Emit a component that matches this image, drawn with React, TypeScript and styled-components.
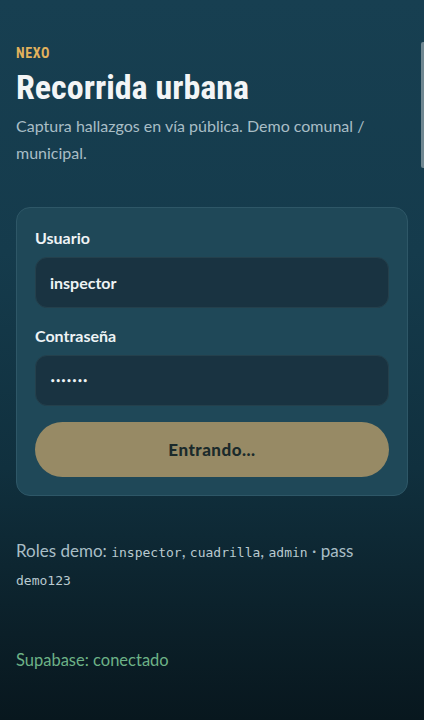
import React from "react";
import styled, { createGlobalStyle } from "styled-components";

const Global = createGlobalStyle`
  html, body { margin: 0; padding: 0; height: 100%; }
  body {
    background: #0b1c24;
    font-family: Lato, "Noto Sans", sans-serif;
  }
  #root { min-height: 100vh; }
`;

const Page = styled.main`
  position: relative;
  min-height: 720px;
  box-sizing: border-box;
  padding: 44px 16px 40px;
  background: linear-gradient(180deg, #173f51 0%, #153b4c 35%, #10303e 65%, #0b1f28 88%, #08171e 100%);
  color: #e8eef0;
  overflow: hidden;
`;

const ScrollThumb = styled.div`
  position: absolute;
  top: 42px;
  right: 0;
  width: 3px;
  height: 126px;
  border-radius: 2px 0 0 2px;
  background: #6f8791;
`;

const Brand = styled.div`
  font-family: "Liberation Sans Narrow", "Roboto Condensed", "DejaVu Sans Condensed", "Noto Sans", sans-serif;
  font-stretch: condensed;
  font-weight: 700;
  font-size: 14px;
  letter-spacing: 0.6px;
  color: #e2b25c;
  line-height: 18px;
`;

const Title = styled.h1`
  margin: 6px 0 0;
  font-family: "Liberation Sans Narrow", "Roboto Condensed", "DejaVu Sans Condensed", "Noto Sans", sans-serif;
  font-stretch: condensed;
  font-weight: 700;
  font-size: 34px;
  line-height: 38px;
  letter-spacing: 0px;
  color: #f3f5f6;
`;

const Subtitle = styled.p`
  margin: 6px 0 0;
  font-size: 16px;
  line-height: 27px;
  color: #a9bec6;
`;

const Card = styled.form`
  margin-top: 41px;
  box-sizing: border-box;
  border: 1px solid #2e5767;
  border-radius: 14px;
  background: #1f4858;
  padding: 18px;
  display: flex;
  flex-direction: column;
`;

const Label = styled.label<{ $gap?: number }>`
  font-size: 16px;
  font-weight: 700;
  line-height: 24px;
  color: #eef3f5;
  margin-top: ${(p) => p.$gap ?? 0}px;
`;

const Input = styled.div`
  margin-top: 7px;
  height: 51px;
  box-sizing: border-box;
  border: 1px solid #24404c;
  border-radius: 12px;
  background: #193341;
  display: flex;
  align-items: center;
  padding: 0 14px;
  font-size: 16px;
  font-weight: 700;
  color: #eef3f5;
`;

const Dots = styled.span`
  font-size: 8.5px;
  letter-spacing: 0px;
  font-family: "DejaVu Sans", sans-serif;
`;

const Button = styled.div`
  margin-top: 16px;
  height: 55px;
  border-radius: 28px;
  background: #978a65;
  display: flex;
  align-items: center;
  justify-content: center;
  font-size: 17px;
  font-weight: 900;
  letter-spacing: 0.5px;
  color: #1b2a2b;
`;

const Roles = styled.p`
  margin: 42px 0 0;
  font-size: 17px;
  line-height: 26px;
  color: #a9bec6;
`;

const Code = styled.code`
  font-family: "DejaVu Sans Mono", monospace;
  font-size: 13px;
  color: #b9cad0;
`;

const Status = styled.p`
  margin: 54px 0 0;
  font-size: 16.5px;
  line-height: 24px;
  color: #6db287;
`;

export default function App() {
  return (
    <>
      <Global />
      <Page>
        <ScrollThumb />
        <Brand>NEXO</Brand>
        <Title>Recorrida urbana</Title>
        <Subtitle>Captura hallazgos en vía pública. Demo comunal / municipal.</Subtitle>
        <Card onSubmit={(e) => e.preventDefault()}>
          <Label>Usuario</Label>
          <Input>inspector</Input>
          <Label $gap={16}>Contraseña</Label>
          <Input>
            <Dots>•••••••</Dots>
          </Input>
          <Button>Entrando...</Button>
        </Card>
        <Roles>
          Roles demo: <Code>inspector</Code>, <Code>cuadrilla</Code>, <Code>admin</Code> · pass{" "}
          <Code>demo123</Code>
        </Roles>
        <Status>Supabase: conectado</Status>
      </Page>
    </>
  );
}
